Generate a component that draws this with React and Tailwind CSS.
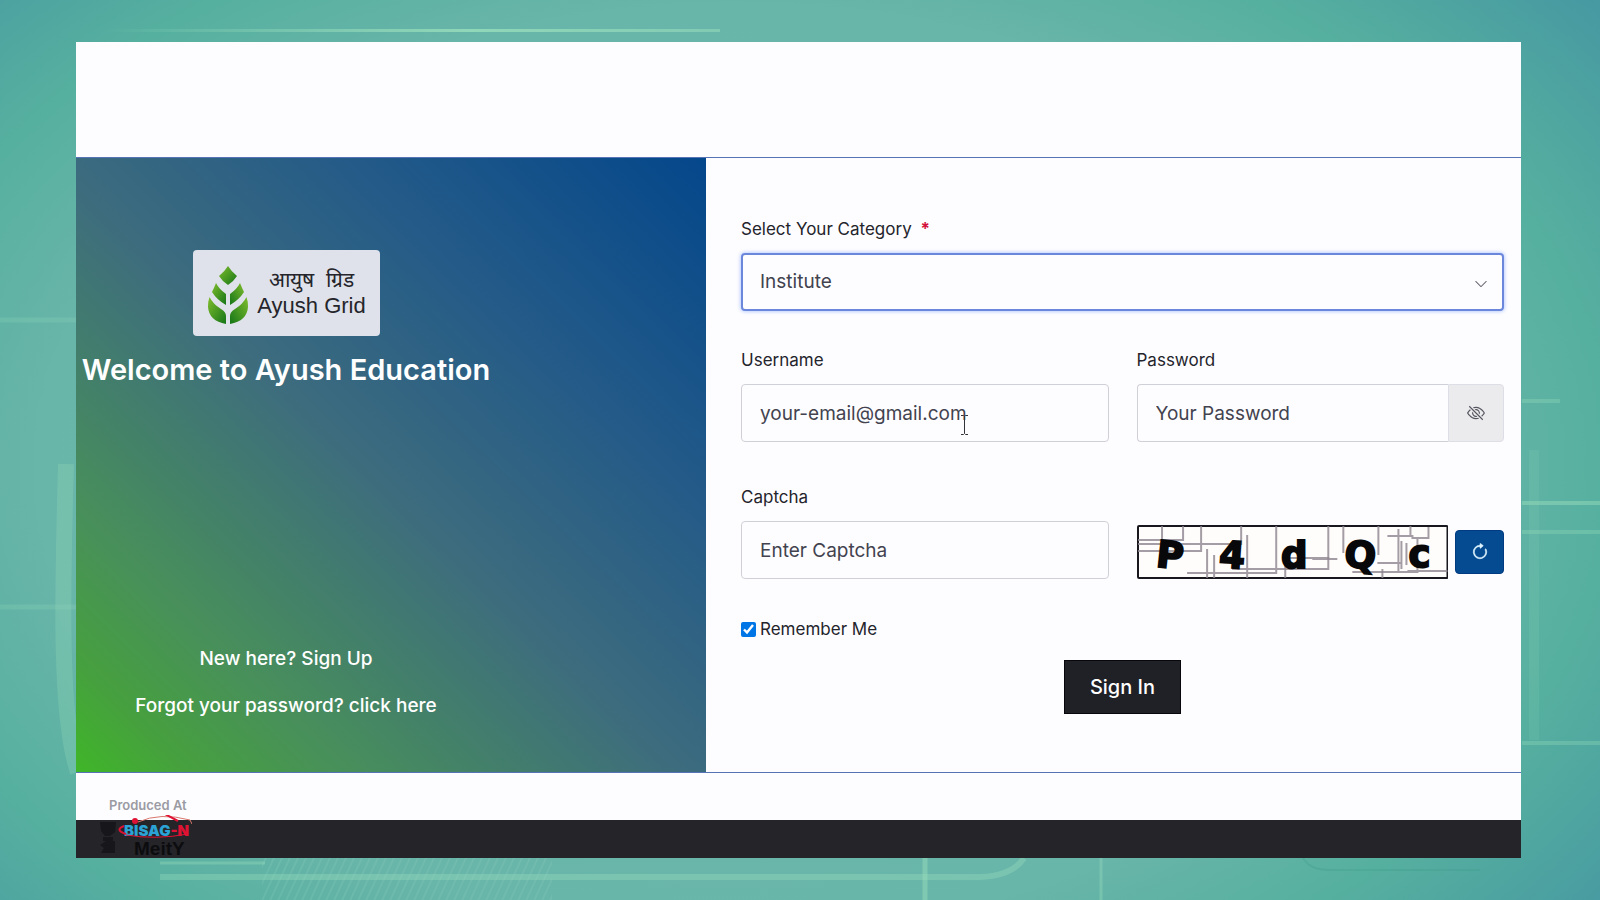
import { BsArrowClockwise, BsChevronDown, BsEyeSlash } from "react-icons/bs";

const field =
  "h-[58px] w-full min-w-0 border border-[#d0d0d8] bg-[#fdfdff] px-[18px] text-[19px] text-[#43434f] outline-none placeholder:text-[#43434f] placeholder:opacity-100";

function Backdrop() {
  return (
    <svg
      className="absolute inset-0 h-full w-full"
      viewBox="0 0 1600 900"
      preserveAspectRatio="none"
      fill="none"
      stroke="#9be0bd"
      aria-hidden="true"
    >
      <defs>
        <linearGradient id="streak" x1="100" x2="720" y1="0" y2="0" gradientUnits="userSpaceOnUse">
          <stop offset="0" stopColor="#9be0bd" stopOpacity="0" />
          <stop offset="0.6" stopColor="#9be0bd" stopOpacity="0.8" />
          <stop offset="1" stopColor="#9be0bd" stopOpacity="0.5" />
        </linearGradient>
        <pattern id="hatch" width="8" height="14" patternUnits="userSpaceOnUse" patternTransform="skewX(-25)">
          <path d="M2 0V14" stroke="#9be0d0" strokeOpacity="0.3" />
        </pattern>
      </defs>
      <rect x="100" y="29" width="620" height="3" fill="url(#streak)" stroke="none" />
      <rect x="262" y="858" width="290" height="42" fill="url(#hatch)" stroke="none" />
      <path d="M0 320H76M0 607H76" strokeOpacity="0.2" strokeWidth="5" />
      <path d="M66 464C62 600 60 720 78 772" strokeOpacity="0.25" strokeWidth="16" />
      <path d="M160 863H265" strokeOpacity="0.35" strokeWidth="3" />
      <path d="M160 877H980Q1012 876 1024 858" strokeOpacity="0.35" strokeWidth="6" />
      <path d="M925 858V900" strokeOpacity="0.45" strokeWidth="5" />
      <path d="M1101 858V900" strokeOpacity="0.35" strokeWidth="3" />
      <path d="M1303 858Q1310 870 1330 870H1480" stroke="#3f9d88" strokeOpacity="0.3" strokeWidth="2" />
      <path d="M1522 503H1600" strokeOpacity="0.45" strokeWidth="4" />
      <path d="M1522 532H1600M1522 743H1600M1522 401H1560" strokeOpacity="0.3" strokeWidth="4" />
      <path d="M1534 450V740" strokeOpacity="0.12" strokeWidth="10" />
    </svg>
  );
}

function AyushLogo() {
  return (
    <div className="flex h-[86px] w-[187px] items-center rounded bg-[#dfe2ea] pl-[15px] pr-1 text-[#25252b]">
      <svg className="mt-1 h-[58px] w-10 shrink-0" viewBox="0 0 40 58" aria-hidden="true">
        <defs>
          <linearGradient id="leaf" x1="0" x2="1" y1="0" y2="1">
            <stop offset="0" stopColor="#7fbd2c" />
            <stop offset="1" stopColor="#157518" />
          </linearGradient>
          <linearGradient id="leafRight" x1="1" x2="0" y1="0" y2="1">
            <stop offset="0" stopColor="#7fbd2c" />
            <stop offset="1" stopColor="#157518" />
          </linearGradient>
        </defs>
        <path d="M20 0Q23 5 29 10Q26 15 20 19Q14 15 11 10Q17 5 20 0Z" fill="url(#leaf)" />
        <path d="M8 17Q11 23 18 28V39Q9 34 4 26Q6 22 8 17Z" fill="url(#leaf)" />
        <path d="M32 17Q29 23 22 28V39Q31 34 36 26Q34 22 32 17Z" fill="url(#leafRight)" />
        <path d="M1.500 31Q5 38 13 43Q18 46 18 50V58Q1 55 0 41Q0 35 1.500 31Z" fill="url(#leaf)" />
        <path d="M38.500 31Q35 38 27 43Q22 46 22 50V58Q39 55 40 41Q40 35 38.500 31Z" fill="url(#leafRight)" />
      </svg>
      <div className="flex flex-1 flex-col items-center font-['Liberation_Sans',sans-serif]">
        <span lang="hi" className="text-[21px] leading-[25px]">आयुष&nbsp; ग्रिड</span>
        <span className="text-[22px] leading-7">Ayush Grid</span>
      </div>
    </div>
  );
}

function Captcha() {
  return (
    <svg
      className="h-[54px] w-full min-w-0 flex-1"
      viewBox="0 0 311 54"
      preserveAspectRatio="none"
      role="img"
      aria-label="Captcha P4dQc"
    >
      <rect x="1" y="1" width="309" height="52" rx="1" fill="#fffdfb" stroke="#17171d" strokeWidth="2" />
      <g fill="none" stroke="#8d8490" strokeWidth="2" strokeOpacity="0.8">
        <path d="M1 15H46V1M25 1V19M1 19H104V1M1 26H64V1" />
        <path d="M70 24V53M77 30V53M110 10V53M50 48H139V1M95 44H191V1" />
        <path d="M148 53V33H192M175 34H200M206 1V28M241 1V30M245 53V44" />
        <path d="M250 11H276M261 4V46M264 16V44M269 18V40M273 1V11M274 13H291V2M280 13V47H215M240 38H265M270 46H310" />
      </g>
      <g
        fill="#08080a"
        stroke="#08080a"
        strokeWidth="2"
        fontFamily="'DejaVu Sans', sans-serif"
        fontWeight="700"
        fontSize="37"
        textAnchor="middle"
      >
        <text x="33" y="43" transform="rotate(6 33 31)">P</text>
        <text x="95" y="43" transform="rotate(4 95 31)">4</text>
        <text x="157" y="43">d</text>
        <text x="223" y="43" transform="rotate(4 223 31)">Q</text>
        <text x="282" y="42">c</text>
      </g>
    </svg>
  );
}

function ProducerMark() {
  return (
    <div className="absolute left-5 top-[22px] h-[64px] w-28 overflow-hidden">
      <div className="pl-[13px] text-[13px] font-semibold leading-5 text-[#9b9ba3]">Produced At</div>
      <div className="relative pl-7 pt-[7px] text-[15px] font-black leading-[17px] text-[#2ba3d6]">
        BISAG<span className="text-[#e01234]">-N</span>
        <svg className="absolute left-0 top-0 h-[44px] w-24" viewBox="0 0 96 44" fill="none" aria-hidden="true">
          <path d="M42 7Q64 -3 94 5L96 9" stroke="#d9776c" strokeWidth="1" />
          <path d="M30 19Q18 15 28 11" stroke="#e01234" strokeWidth="2" />
          <path d="M30 20Q60 25 92 19" stroke="#e01234" strokeWidth="1" />
          <circle cx="39" cy="6" r="3" fill="#e01234" />
          <path d="M69 -1L82 6" stroke="#e01234" strokeWidth="2" />
          <g fill="#17171b">
            <path d="M4 7H20L19 17L14 21H9L5 16ZM7 22H17V26H7Z" />
            <path d="M4 30L10 26H19V38H5L8 33Z" />
          </g>
        </svg>
      </div>
      <div className="pl-[38px] font-['Liberation_Sans',sans-serif] text-[19px] font-bold leading-[20px] text-[#0c0c0f]">
        MeitY
      </div>
    </div>
  );
}

export default function App() {
  return (
    <div className="relative flex min-h-screen flex-col bg-[radial-gradient(ellipse_78%_92%_at_46%_52%,#70b9ad_0%,#68b5a9_56%,#56b09f_70%,#3e8ca3_100%)] pb-[42px] pl-[76px] pr-[79px] pt-[42px] font-[Inter,sans-serif]">
      <Backdrop />
      <div className="relative flex flex-1 flex-col bg-[#fdfdff]">
        <header className="h-[115px]" />
        <main className="flex flex-1 border-y border-[#5573b5]">
          <section className="flex w-[43.6%] flex-col bg-[linear-gradient(to_top_right,#3fb628_0%,#46a03e_9%,#48905a_21%,#3d6c7e_48%,#235a88_72%,#04478b_100%)] text-white">
            <div className="flex w-[420px] flex-1 flex-col items-center justify-between pb-[52px] pt-[92px]">
              <div className="flex flex-col items-center gap-4">
                <AyushLogo />
                <h1 className="whitespace-nowrap text-[29px] font-semibold leading-9">Welcome to Ayush Education</h1>
              </div>
              <div className="flex flex-col items-center gap-[19px] text-[19px] font-medium leading-7">
                <p>New here? <a href="#signup">Sign Up</a></p>
                <p>Forgot your password? <a href="#reset">click here</a></p>
              </div>
            </div>
          </section>

          <form className="flex min-w-0 flex-1 flex-col pl-[35px] pr-[17px] pt-[59px] text-[#24242c]" onSubmit={(e) => e.preventDefault()}>
            <label htmlFor="category" className="text-[17px] leading-6">
              Select Your Category <span className="ml-1 font-bold text-[#d3123c]">*</span>
            </label>
            <div className="relative mt-3">
              <select
                id="category"
                defaultValue="Institute"
                className="h-[58px] w-full appearance-none rounded border-2 border-[#6b87dc] bg-[#fdfdff] px-[17px] text-[19px] text-[#43434f] shadow-[0_0_4px_#9db8ff] outline-none"
              >
                <option>Institute</option>
              </select>
              <BsChevronDown className="pointer-events-none absolute right-4 top-6 h-[14px] w-[14px] text-[#62626c]" />
            </div>

            <div className="mt-[37px] grid grid-cols-2 gap-x-7">
              <div className="relative">
                <label htmlFor="username" className="block text-[17px] leading-6">Username</label>
                <input id="username" type="text" placeholder="your-email@gmail.com" className={`${field} mt-3 rounded`} />
                <svg className="pointer-events-none absolute left-[219px] top-[66px] h-[22px] w-[9px]" viewBox="0 0 9 22" fill="none" stroke="#33333b" aria-hidden="true">
                  <path d="M1 1.500H3.500L4.500 2.500L5.500 1.500H8M4.500 2.500V19.500M1 20.500H3.500L4.500 19.500L5.500 20.500H8" />
                </svg>
              </div>
              <div>
                <label htmlFor="password" className="block text-[17px] leading-6">Password</label>
                <div className="mt-3 flex">
                  <input id="password" type="password" placeholder="Your Password" className={`${field} flex-1 rounded-l border-r-0`} />
                  <button type="button" aria-label="Show password" className="flex w-14 shrink-0 items-center justify-center rounded-r border border-[#dedee6] bg-[#ebebee] text-[#55555f]">
                    <BsEyeSlash className="h-[18px] w-[18px]" />
                  </button>
                </div>
              </div>
            </div>

            <div className="mt-[43px] grid grid-cols-2 items-end gap-x-7">
              <div>
                <label htmlFor="captcha" className="block text-[17px] leading-6">Captcha</label>
                <input id="captcha" type="text" placeholder="Enter Captcha" className={`${field} mt-3 rounded`} />
              </div>
              <div className="flex items-center gap-[7px]">
                <Captcha />
                <button type="button" aria-label="Refresh captcha" className="flex h-11 w-[49px] shrink-0 items-center justify-center rounded border border-[#003a80] bg-[#054b91] text-[#dff4ff]">
                  <BsArrowClockwise className="h-[18px] w-[18px] stroke-[0.5]" />
                </button>
              </div>
            </div>

            <div className="mt-[38px] flex items-center gap-1">
              <input id="remember" type="checkbox" defaultChecked className="h-[15px] w-[15px] accent-[#0075e6]" />
              <label htmlFor="remember" className="text-[17px] leading-6">Remember Me</label>
            </div>
            <button type="submit" className="mb-12 mt-[19px] h-[54px] w-[117px] self-center border border-[#08080c] bg-[#202027] text-[20px] font-medium text-white">
              Sign In
            </button>
          </form>
        </main>
        <footer className="relative border-b-[38px] border-[#242429]">
          <div className="h-[47px]" />
          <ProducerMark />
        </footer>
      </div>
    </div>
  );
}
